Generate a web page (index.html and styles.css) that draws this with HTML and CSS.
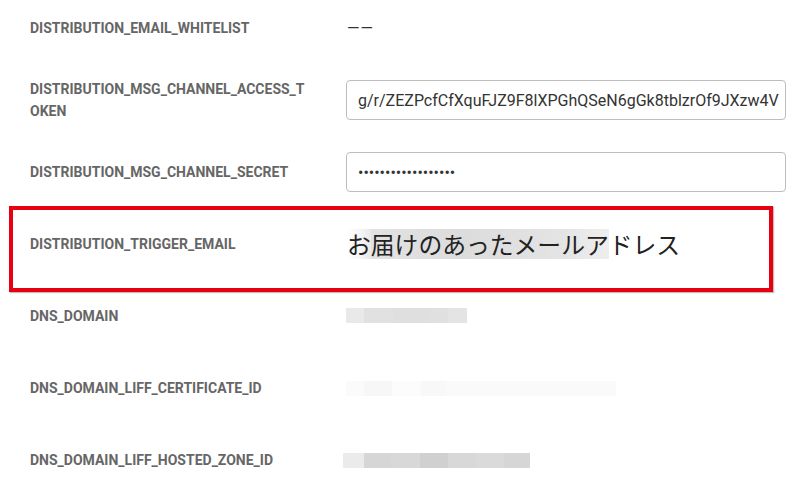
FILE: index.html
```html
<!DOCTYPE html>
<html lang="ja">
<head>
<meta charset="utf-8">
<title>Settings</title>
<link rel="stylesheet" href="styles.css">
</head>
<body>
<div class="list">
  <div class="row">
    <div class="label">DISTRIBUTION_EMAIL_WHITELIST</div>
    <div class="value"><span class="dash">——</span></div>
  </div>
  <div class="row">
    <div class="label">DISTRIBUTION_MSG_CHANNEL_ACCESS_TOKEN</div>
    <div class="value"><input class="field field-token" type="text" value="g/r/ZEZPcfCfXquFJZ9F8lXPGhQSeN6gGk8tblzrOf9JXzw4VbQ1mK" readonly></div>
  </div>
  <div class="row">
    <div class="label">DISTRIBUTION_MSG_CHANNEL_SECRET</div>
    <div class="value"><input class="field" type="password" value="abcdefghijklmnopqr" readonly></div>
  </div>
  <div class="row row-marked">
    <div class="label">DISTRIBUTION_TRIGGER_EMAIL</div>
    <div class="value"><span class="jp"><span class="hl-start">お</span><span class="hl">届けのあったメールア</span><span>ドレス</span></span></div>
  </div>
  <div class="row">
    <div class="label">DNS_DOMAIN</div>
    <div class="value"><span class="redact r1"></span></div>
  </div>
  <div class="row">
    <div class="label">DNS_DOMAIN_LIFF_CERTIFICATE_ID</div>
    <div class="value"><span class="redact r2"></span></div>
  </div>
  <div class="row">
    <div class="label">DNS_DOMAIN_LIFF_HOSTED_ZONE_ID</div>
    <div class="value"><span class="redact r3"></span></div>
  </div>
</div>
</body>
</html>
```
FILE: styles.css
```css
html, body {
  margin: 0;
  padding: 0;
  background: #fff;
  overflow: hidden;
}
body {
  font-family: Roboto, "Noto Sans", "Noto Sans CJK JP", sans-serif;
  width: 799px;
  height: 496px;
}
.list {
  margin-top: -8px;
  display: flex;
  flex-direction: column;
}
.row {
  display: grid;
  grid-template-columns: 278px 440px;
  column-gap: 38px;
  align-items: center;
  min-height: 72px;
  padding-left: 30px;
}
.label {
  font-size: 14px;
  font-weight: 700;
  color: #666;
  line-height: 22px;
  word-break: break-all;
}
.value {
  display: flex;
  align-items: center;
  min-width: 0;
}
.dash {
  font-size: 16px;
  color: #333;
  letter-spacing: 1px;
  margin-left: 1px;
}
.field {
  box-sizing: border-box;
  width: 440px;
  height: 40px;
  margin: 0;
  padding: 0 0 0 11px;
  border: 1px solid #bdbdbd;
  border-radius: 4px;
  font-family: Roboto, sans-serif;
  font-size: 16px;
  color: #333;
  background: #fff;
  outline: none;
}
.field-token {
  padding-right: 6px;
}
.row-marked {
  position: relative;
}
.row-marked::after {
  content: "";
  position: absolute;
  left: 9px;
  right: 26px;
  top: -2px;
  bottom: -12px;
  border: 4px solid #e60012;
  box-shadow: 1px 1px 1px rgba(0, 0, 0, 0.25);
  pointer-events: none;
}
.jp {
  font-family: "Noto Sans CJK JP", sans-serif;
  font-weight: 400;
  font-size: 23.8px;
  color: #222;
  line-height: 30px;
  display: flex;
  margin-left: 1px;
}
.hl-start {
  background: linear-gradient(90deg, #fff 0%, #f6f6f6 50%, #e8e8e8 100%);
}
.hl {
  background: linear-gradient(90deg, #e2e2e2 0%, #dcdcdc 40%, #e4e4e4 80%, #eeeeee 100%);
}
.redact {
  display: block;
  height: 15px;
}
.r1 {
  width: 121px;
  margin-top: -2px;
  background: linear-gradient(90deg, #e9e9e9 0 18px, #e1e1e1 18px 47px, #dfdfdf 47px 83px, #e0e0e0 83px 102px, #e4e4e4 102px);
}
.r2 {
  width: 270px;
  background: linear-gradient(90deg, #fbfbfb 0 18px, #f7f7f7 18px 46px, #fcfcfc 46px 75px, #f8f8f8 75px 100px, #fafafa 100px);
}
.r3 {
  width: 187px;
  margin-left: -3px;
  background: linear-gradient(90deg, #ebebeb 0 21px, #d6d6d6 21px 48px, #d8d8d8 48px 77px, #d0d0d0 77px 105px, #d8d8d8 105px 133px, #dadada 133px 161px, #d6d6d6 161px);
}
```
